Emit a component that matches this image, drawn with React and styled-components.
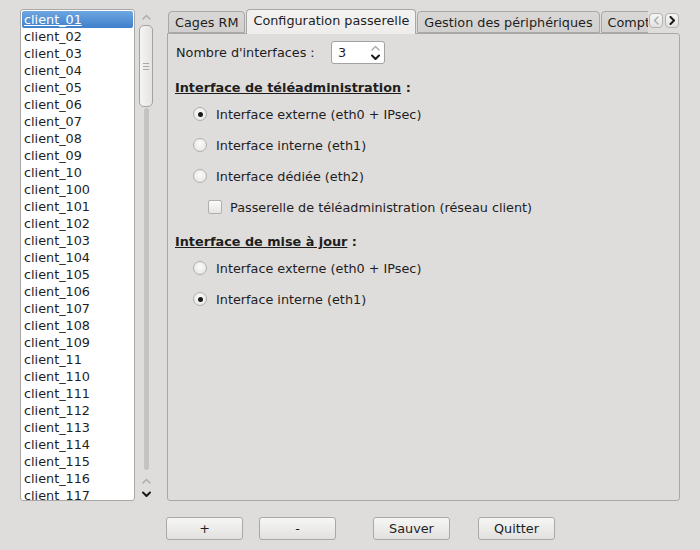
import React from 'react'
import styled, { createGlobalStyle } from 'styled-components'

const GlobalStyle = createGlobalStyle`
  html, body {
    margin: 0;
    padding: 0;
    background: #dfdddb;
  }
  body {
    font-family: "DejaVu Sans", "Liberation Sans", sans-serif;
    font-size: 12.8px;
    color: #1e1e1e;
  }
`

const clients = [
  '01', '02', '03', '04', '05', '06', '07', '08', '09', '10',
  '100', '101', '102', '103', '104', '105', '106', '107', '108', '109',
  '11', '110', '111', '112', '113', '114', '115', '116', '117',
].map(n => 'client_' + n)

// little chevrons used by the scrollbar, spinbox and tab scrollers
const Chevron = ({ dir = 'up', dark }) => {
  const pts = {
    up: '1,5 4.5,1.5 8,5',
    down: '1,1.5 4.5,5 8,1.5',
    left: '5,1 1.5,4.5 5,8',
    right: '1.5,1 5,4.5 1.5,8',
  }[dir]
  const horiz = dir === 'left' || dir === 'right'
  return (
    <svg width={horiz ? 7 : 9} height={horiz ? 9 : 7} viewBox={horiz ? '0 0 7 9' : '0 0 9 7'}>
      <polyline
        points={pts}
        fill="none"
        stroke={dark ? '#1a1a1a' : '#a9a9a9'}
        strokeWidth={dark ? 2 : 1.4}
        strokeLinecap="round"
        strokeLinejoin="round"
      />
    </svg>
  )
}

export default function App() {
  return (
    <Window>
      <GlobalStyle />
      <MainRow>
        <ListBox>
          {clients.map((c, i) => (
            <ListItem key={c} $selected={i === 0}>{c}</ListItem>
          ))}
        </ListBox>

        <ScrollBar>
          <ArrowCell $h={16}><Chevron dir="up" /></ArrowCell>
          <Handle><Grip /></Handle>
          <Groove />
          <ArrowCell $h={12}><Chevron dir="up" /></ArrowCell>
          <ArrowCell $h={14}><Chevron dir="down" dark /></ArrowCell>
        </ScrollBar>

        <TabWidget>
          <TabBar>
            <TabStrip>
              <Tab>Cages RM</Tab>
              <Tab $active>Configuration passerelle</Tab>
              <Tab>Gestion des périphériques</Tab>
              <Tab>Comptes</Tab>
            </TabStrip>
            <TabScroller><Chevron dir="left" /></TabScroller>
            <TabScroller><Chevron dir="right" dark /></TabScroller>
          </TabBar>

          <Pane>
            <FieldRow>
              <FieldLabel>Nombre d'interfaces :</FieldLabel>
              <SpinBox>
                <span>3</span>
                <SpinArrows>
                  <Chevron dir="up" />
                  <Chevron dir="down" dark />
                </SpinArrows>
              </SpinBox>
            </FieldRow>

            <Heading $top={15}><u>Interface de téléadministration</u> :</Heading>
            <OptionRow $top={9}><Radio $checked />Interface externe (eth0 + IPsec)</OptionRow>
            <OptionRow $top={13}><Radio />Interface interne (eth1)</OptionRow>
            <OptionRow $top={13}><Radio />Interface dédiée (eth2)</OptionRow>
            <OptionRow $top={13} $indent={32}><CheckBox />Passerelle de téléadministration (réseau client)</OptionRow>

            <Heading $top={17}><u>Interface de mise à jour</u> :</Heading>
            <OptionRow $top={9}><Radio />Interface externe (eth0 + IPsec)</OptionRow>
            <OptionRow $top={13}><Radio $checked />Interface interne (eth1)</OptionRow>
          </Pane>
        </TabWidget>
      </MainRow>

      <ButtonRow>
        <Button $ml={146}>+</Button>
        <Button $ml={16}>-</Button>
        <Button $ml={37}>Sauver</Button>
        <Button $ml={28}>Quitter</Button>
      </ButtonRow>
    </Window>
  )
}

const Window = styled.div`
  width: 700px;
  height: 550px;
  box-sizing: border-box;
  padding: 9px 20px 0 20px;
  display: flex;
  flex-direction: column;
`

const MainRow = styled.div`
  display: flex;
  height: 492px;
`

const ListBox = styled.div`
  width: 115px;
  height: 100%;
  box-sizing: border-box;
  padding: 1px;
  background: #fff;
  border: 1px solid #a9a8a7;
  border-radius: 3px;
  overflow: hidden;
`

const ListItem = styled.div`
  height: 17px;
  line-height: 17px;
  padding-left: 2px;
  white-space: nowrap;
  border-radius: 2px;
  ${p => p.$selected && `
    background: linear-gradient(#6ea6e0, #3f80cb);
    color: #fff;
    text-decoration: underline;
  `}
`

const ScrollBar = styled.div`
  width: 18px;
  margin-left: 2px;
  display: flex;
  flex-direction: column;
  align-items: center;
`

const ArrowCell = styled.div`
  height: ${p => p.$h}px;
  display: flex;
  align-items: center;
  justify-content: center;
`

const Handle = styled.div`
  width: 14px;
  height: 82px;
  box-sizing: border-box;
  border: 1px solid #a3a2a1;
  border-radius: 5px;
  background: linear-gradient(90deg, #f5f5f4, #e4e3e2);
  display: flex;
  align-items: center;
  justify-content: center;
`

const Grip = styled.div`
  width: 6px;
  height: 5px;
  border-top: 1px solid #a8a8a8;
  border-bottom: 1px solid #a8a8a8;
  position: relative;

  &::after {
    content: '';
    position: absolute;
    left: 0;
    right: 0;
    top: 2px;
    border-top: 1px solid #a8a8a8;
  }
`

const Groove = styled.div`
  flex: 1;
  width: 5px;
  margin: 1px 0 5px;
  background: #c4c3c2;
  border-radius: 3px;
`

const TabWidget = styled.div`
  width: 513px;
  margin-left: 12px;
  display: flex;
  flex-direction: column;
`

const TabBar = styled.div`
  height: 24px;
  display: flex;
  align-items: flex-end;
`

const TabStrip = styled.div`
  flex: 1;
  display: flex;
  align-items: flex-end;
  padding-left: 1px;
  overflow: hidden;
  height: 25px;
  margin-bottom: -1px;
`

const Tab = styled.div`
  flex-shrink: 0;
  box-sizing: border-box;
  height: ${p => (p.$active ? 25 : 22)}px;
  line-height: ${p => (p.$active ? 22 : 21)}px;
  padding: 0 6px;
  margin-right: 1px;
  margin-bottom: ${p => (p.$active ? 0 : 1)}px;
  border: 1px solid #a9a8a7;
  border-bottom: ${p => (p.$active ? 'none' : '1px solid #a9a8a7')};
  border-radius: 4px 4px 0 0;
  background: ${p => (p.$active
    ? 'linear-gradient(#f3f2f1, #eeedec)'
    : 'linear-gradient(#dad8d6, #d2d0ce)')};
  white-space: nowrap;
  position: relative;
  z-index: ${p => (p.$active ? 2 : 0)};
`

const TabScroller = styled.div`
  width: 14px;
  height: 15px;
  margin: 0 1px 5px 1px;
  box-sizing: border-box;
  border: 1px solid #b3b2b1;
  border-radius: 4px;
  background: linear-gradient(#f6f6f5, #e3e2e1);
  display: flex;
  align-items: center;
  justify-content: center;
  flex-shrink: 0;
`

const Pane = styled.div`
  flex: 1;
  box-sizing: border-box;
  border: 1px solid #a9a8a7;
  border-radius: 0 3px 3px 3px;
  padding: 7px 8px;
  display: flex;
  flex-direction: column;
  background: #dfdddb;
`

const FieldRow = styled.div`
  display: flex;
  align-items: center;
  height: 23px;
`

const FieldLabel = styled.div`
  width: 155px;
`

const SpinBox = styled.div`
  width: 54px;
  height: 23px;
  box-sizing: border-box;
  border: 1px solid #a3a2a1;
  border-radius: 3px;
  background: #fff;
  display: flex;
  align-items: center;
  justify-content: space-between;
  padding: 0 4px 0 6px;
`

const SpinArrows = styled.div`
  display: flex;
  flex-direction: column;
  gap: 2px;
`

const Heading = styled.div`
  margin-top: ${p => p.$top}px;
  height: 17px;
  line-height: 17px;
  font-weight: bold;
  margin-left: -1px;
`

const OptionRow = styled.div`
  margin-top: ${p => p.$top}px;
  margin-left: ${p => p.$indent || 17}px;
  height: 18px;
  display: flex;
  align-items: center;
  gap: 9px;
  white-space: nowrap;
`

const Radio = styled.span`
  width: 14px;
  height: 14px;
  box-sizing: border-box;
  border-radius: 50%;
  border: 1px solid #b0afae;
  background: radial-gradient(circle at 50% 40%, #fbfbfb, #e3e2e1);
  display: flex;
  align-items: center;
  justify-content: center;

  &::after {
    content: '';
    width: 5px;
    height: 5px;
    border-radius: 50%;
    background: #1a1a1a;
    display: ${p => (p.$checked ? 'block' : 'none')};
  }
`

const CheckBox = styled.span`
  width: 14px;
  height: 14px;
  box-sizing: border-box;
  border-radius: 2px;
  border: 1px solid #b0afae;
  background: linear-gradient(#fbfbfb, #e6e5e4);
  margin-right: -1px;
`

const ButtonRow = styled.div`
  display: flex;
  margin-top: 16px;
`

const Button = styled.div`
  width: 77px;
  height: 23px;
  margin-left: ${p => p.$ml}px;
  box-sizing: border-box;
  border: 1px solid #a9a8a7;
  border-radius: 3px;
  background: linear-gradient(#f6f6f5, #e2e1e0);
  display: flex;
  align-items: center;
  justify-content: center;
`
